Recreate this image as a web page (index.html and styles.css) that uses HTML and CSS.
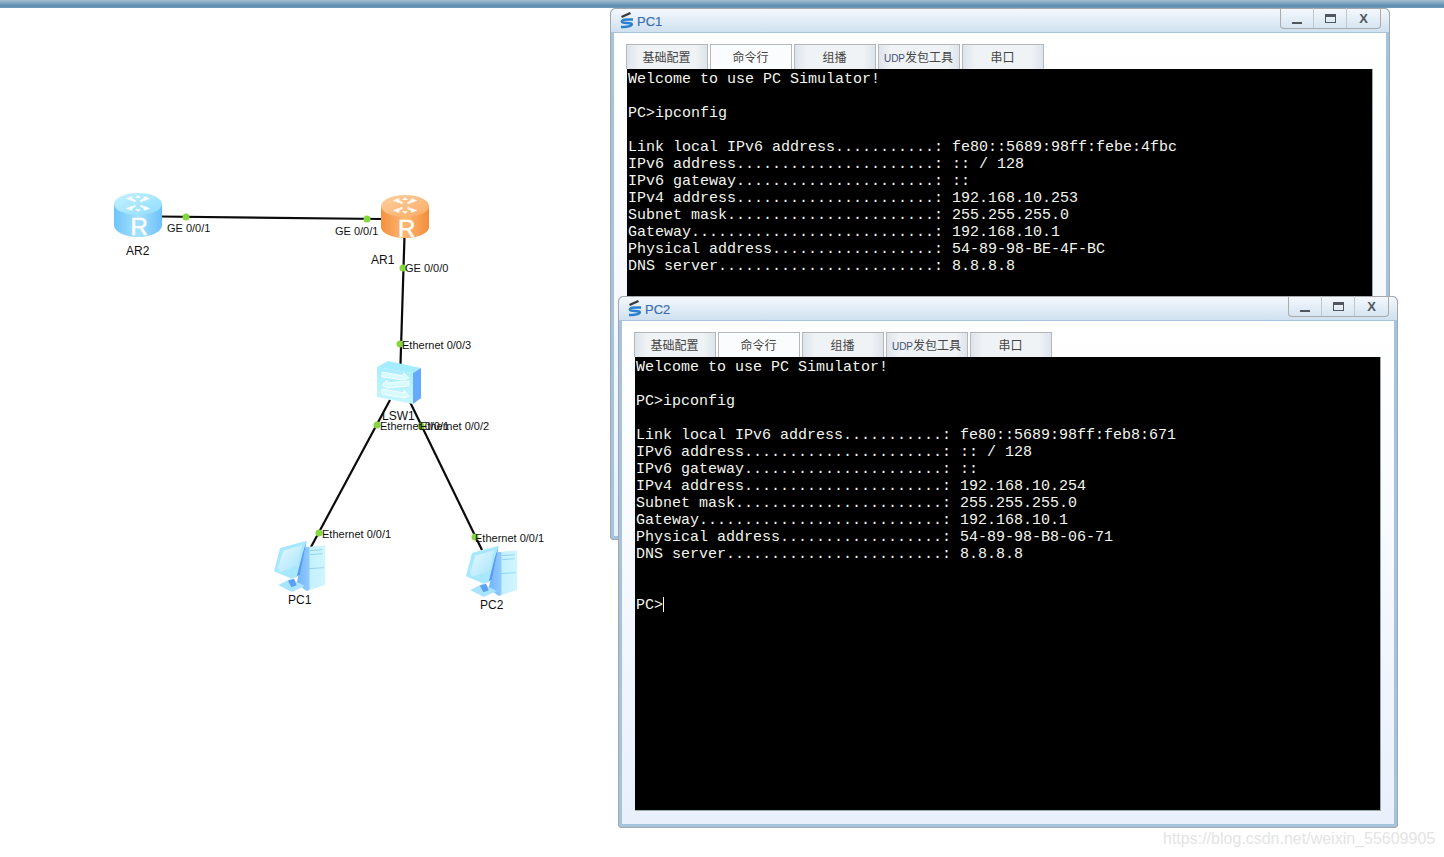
FILE: index.html
```html
<!DOCTYPE html>
<html lang="zh">
<head>
<meta charset="utf-8">
<title>eNSP</title>
<link rel="stylesheet" href="styles.css">
</head>
<body>
<div class="desktop">
  <div class="topbar"></div>

  <svg class="topology" width="610" height="857" viewBox="0 0 610 857">
    <defs>
      <linearGradient id="blueBody" x1="0" x2="1" y1="0" y2="0">
        <stop offset="0" stop-color="#6fc4fb"/><stop offset="0.5" stop-color="#a5e2ff"/><stop offset="1" stop-color="#6cc0fa"/>
      </linearGradient>
      <linearGradient id="blueTop" x1="0" x2="1" y1="0" y2="1">
        <stop offset="0" stop-color="#c4f2ff"/><stop offset="1" stop-color="#8fdcff"/>
      </linearGradient>
      <linearGradient id="orangeBody" x1="0" x2="1" y1="0" y2="0">
        <stop offset="0" stop-color="#f4913f"/><stop offset="0.5" stop-color="#fdb873"/><stop offset="1" stop-color="#f28d3b"/>
      </linearGradient>
      <linearGradient id="orangeTop" x1="0" x2="1" y1="0" y2="1">
        <stop offset="0" stop-color="#fcd0a0"/><stop offset="1" stop-color="#fbab64"/>
      </linearGradient>
      <linearGradient id="swFront" x1="0" x2="0" y1="0" y2="1">
        <stop offset="0" stop-color="#a8edff"/><stop offset="1" stop-color="#c6f6ff"/>
      </linearGradient>
      <linearGradient id="screen" x1="0" x2="1" y1="0" y2="1">
        <stop offset="0" stop-color="#e6faff"/><stop offset="1" stop-color="#a8e2ff"/>
      </linearGradient>
      <linearGradient id="tower" x1="0" x2="1" y1="0" y2="0">
        <stop offset="0" stop-color="#74b2fb"/><stop offset="0.42" stop-color="#8ec8ff"/><stop offset="0.48" stop-color="#c4f0ff"/><stop offset="1" stop-color="#cff6ff"/>
      </linearGradient>
      <g id="arrows" class="router-arrows">
        <path d="M21.500 8.500L15 4.500M26.500 8.500L33 4.500M21.500 12.500L15 16.500M26.500 12.500L33 16.500"/>
        <path class="router-heads" d="M11.500 5.500l7-2.500-1 5zM36.500 5.500l-7-2.500 1 5zM11.500 15.500l7 2.500-1-5zM36.500 15.500l-7 2.500 1-5z"/>
        <path class="router-heads" d="M24 2l3 3h-6zM24 19l3-3h-6z"/>
      </g>
      <g id="pc">
        <path d="M110 190L135 82L195 76V195L140 213Z" fill="url(#tower)"/>
        <path d="M150 92l38-3M150 104l38-3M146 146l46-3" class="pc-vents"/>
        <path d="M55 195L92 176L135 198L95 216Z" fill="#a8e4ff"/>
        <path d="M84 182l18-6 8 20-16 6z" fill="#5c9ff5"/>
        <path d="M42 154L60 84L140 62L120 164L95 176Z" fill="#a8e8ff"/>
        <path d="M140 62L120 164L95 176L110 170L128 100Z" fill="#5a9af0"/>
        <path d="M54 144L70 92L126 76L112 138L60 156Z" fill="url(#screen)"/>
      </g>
    </defs>

    <g class="links">
      <line x1="160" y1="216.500" x2="382" y2="219"/>
      <line x1="404.500" y1="236" x2="400.500" y2="364"/>
      <line x1="390" y1="400" x2="311" y2="547"/>
      <line x1="410" y1="402" x2="482" y2="550"/>
    </g>

    <g class="node">
      <path d="M114 204v21c0 6.500 10.500 12 24 12s24-5.500 24-12v-21z" fill="url(#blueBody)"/>
      <ellipse cx="138" cy="204" rx="24" ry="11" fill="url(#blueTop)"/>
      <use href="#arrows" x="114" y="193"/>
      <text class="badge" x="130.500" y="235">R</text>
    </g>
    <g class="node">
      <path d="M381 206v21c0 6 10.500 11 24 11s24-5 24-11v-21z" fill="url(#orangeBody)"/>
      <ellipse cx="405" cy="206" rx="24" ry="11" fill="url(#orangeTop)"/>
      <use href="#arrows" x="381" y="195"/>
      <text class="badge" x="398" y="237">R</text>
    </g>
    <g class="node">
      <path d="M377 367L388 361L421 368L413 373Z" fill="#a4ecff"/>
      <path d="M413 373L421 368V398L413 404Z" fill="#66a9ff"/>
      <path d="M377 367L413 373V404L377 397Z" fill="url(#swFront)"/>
      <path class="sw-arrows" d="M382 372L404 376V373L409 378L404 380L382 377ZM409 381L387 383V380L382 385L387 388L409 386ZM382 389L404 393V390L409 396L404 398L382 394Z"/>
    </g>

    <use href="#pc" transform="translate(260 520) scale(.3333)"/>
    <use href="#pc" transform="translate(452 525) scale(.3333)"/>

    <g class="dots">
      <circle cx="186" cy="217" r="3.500"/>
      <circle cx="367" cy="219" r="3.500"/>
      <circle cx="403" cy="268" r="3.500"/>
      <circle cx="400" cy="344" r="3.500"/>
      <circle cx="377" cy="425" r="3.500"/>
      <circle cx="421" cy="426" r="3.500"/>
      <circle cx="319" cy="533" r="3.500"/>
      <circle cx="475" cy="537" r="3.500"/>
    </g>

    <g class="port-labels">
      <text x="167" y="232">GE 0/0/1</text>
      <text x="335" y="235">GE 0/0/1</text>
      <text x="405" y="272">GE 0/0/0</text>
      <text x="402" y="349">Ethernet 0/0/3</text>
      <text x="380" y="430">Ethernet 0/0/1</text>
      <text x="420" y="430">Ethernet 0/0/2</text>
      <text x="322" y="538">Ethernet 0/0/1</text>
      <text x="475" y="542">Ethernet 0/0/1</text>
    </g>
    <g class="node-labels">
      <text x="126" y="255">AR2</text>
      <text x="371" y="264">AR1</text>
      <text x="382" y="420">LSW1</text>
      <text x="288" y="604">PC1</text>
      <text x="480" y="609">PC2</text>
    </g>
  </svg>

  <section class="window window-pc1">
    <header class="titlebar">
      <svg class="title-icon" width="16" height="17" viewBox="0 0 16 17"><path d="M2 4L11 0l1 2-9 4z" fill="#3a3a3a"/><path d="M14 7.500C8 7.500 2 7 3 10C4 11.500 10 10.500 12.500 11.500C14 13 11 15 2 15" fill="none" stroke="#2b7fd0" stroke-width="2.400"/></svg>
      <span class="title-text">PC1</span>
      <div class="controls">
        <button class="ctl"><span class="ctl-min"></span></button>
        <button class="ctl"><span class="ctl-max"></span></button>
        <button class="ctl ctl-x">X</button>
      </div>
    </header>
    <div class="content">
      <nav class="tabs">
        <div class="tab">基础配置</div>
        <div class="tab tab-active">命令行</div>
        <div class="tab">组播</div>
        <div class="tab"><span class="tab-small">UDP</span>发包工具</div>
        <div class="tab">串口</div>
      </nav>
<pre class="terminal">Welcome to use PC Simulator!

PC&gt;ipconfig

Link local IPv6 address...........: fe80::5689:98ff:febe:4fbc
IPv6 address......................: :: / 128
IPv6 gateway......................: ::
IPv4 address......................: 192.168.10.253
Subnet mask.......................: 255.255.255.0
Gateway...........................: 192.168.10.1
Physical address..................: 54-89-98-BE-4F-BC
DNS server........................: 8.8.8.8
</pre>
    </div>
  </section>

  <section class="window window-pc2">
    <header class="titlebar">
      <svg class="title-icon" width="16" height="17" viewBox="0 0 16 17"><path d="M2 4L11 0l1 2-9 4z" fill="#3a3a3a"/><path d="M14 7.500C8 7.500 2 7 3 10C4 11.500 10 10.500 12.500 11.500C14 13 11 15 2 15" fill="none" stroke="#2b7fd0" stroke-width="2.400"/></svg>
      <span class="title-text">PC2</span>
      <div class="controls">
        <button class="ctl"><span class="ctl-min"></span></button>
        <button class="ctl"><span class="ctl-max"></span></button>
        <button class="ctl ctl-x">X</button>
      </div>
    </header>
    <div class="content">
      <nav class="tabs">
        <div class="tab">基础配置</div>
        <div class="tab tab-active">命令行</div>
        <div class="tab">组播</div>
        <div class="tab"><span class="tab-small">UDP</span>发包工具</div>
        <div class="tab">串口</div>
      </nav>
<pre class="terminal">Welcome to use PC Simulator!

PC&gt;ipconfig

Link local IPv6 address...........: fe80::5689:98ff:feb8:671
IPv6 address......................: :: / 128
IPv6 gateway......................: ::
IPv4 address......................: 192.168.10.254
Subnet mask.......................: 255.255.255.0
Gateway...........................: 192.168.10.1
Physical address..................: 54-89-98-B8-06-71
DNS server........................: 8.8.8.8


PC&gt;<span class="cursor"></span></pre>
    </div>
  </section>

  <div class="watermark">https://blog.csdn.net/weixin_55609905</div>
</div>
</body>
</html>
```
FILE: styles.css
```css
* { box-sizing: border-box; }
html, body { margin: 0; height: 100%; background: #fff; overflow: hidden; }

.desktop { position: relative; width: 1444px; height: 857px; background: #fff; overflow: hidden; font-family: "Liberation Sans", Arial, sans-serif; }
.topbar { height: 8px; background: linear-gradient(#a5bfd3, #5f8eb0 70%, #6f99b8); }

.topology { position: absolute; left: 0; top: 0; }
.links line { stroke: #0b0b0b; stroke-width: 2.200; }
.dots circle { fill: #86d73f; }
.port-labels text { font: 11px "Liberation Sans", Arial, sans-serif; fill: #111; }
.node-labels text { font: 12px "Liberation Sans", Arial, sans-serif; fill: #111; }
.badge { font: 24px "Liberation Sans", Arial, sans-serif; fill: #fff; stroke: #fff; stroke-width: .5; }
.router-arrows path { fill: none; stroke: #fff; stroke-width: 2.400; stroke-opacity: .8; }
.router-arrows .router-heads { fill: #fff; fill-opacity: .85; stroke: none; }
.sw-arrows { fill: #d8fbff; stroke: #fff; stroke-width: .8; }
.pc-vents { stroke: #7cc2ee; stroke-width: 2; fill: none; }

.window { position: absolute; width: 780px; display: flex; flex-direction: column; border: 1px solid #a2a8ad; border-radius: 5px 5px 3px 3px; background: #a5c3da; padding: 0 3px 3px; }
.window-pc1 { left: 610px; top: 8px; height: 532px; }
.window-pc2 { left: 618px; top: 296px; height: 532px; }

.titlebar { height: 24px; margin: 0 -3px; padding: 0 8px 0 8px; flex: none; display: flex; align-items: flex-start; background: linear-gradient(#f4f8fc, #cfe0f0); border-bottom: 1px solid #a9c5dc; border-radius: 5px 5px 0 0; position: relative; }
.title-icon { margin-top: 3px; flex: none; }
.title-text { margin: 5px 0 0 2px; font-size: 13px; line-height: 15px; color: #3b6eb0; -webkit-text-stroke: .2px #3b6eb0; }
.controls { margin-left: auto; margin-top: -1px; display: flex; height: 21px; border: 1px solid #aaa; border-top: 0; border-radius: 0 0 4px 4px; }
.ctl { width: 33px; padding: 0; border: 0; border-right: 1px solid #c0c8d0; background: transparent; display: flex; align-items: center; justify-content: center; color: #50565c; font: bold 13px "Liberation Sans", Arial, sans-serif; }
.ctl-x { border-right: 0; }
.ctl-min { width: 10px; height: 2px; margin-top: 10px; background: #50565c; }
.ctl-max { width: 11px; height: 9px; border: 1px solid #50565c; border-top-width: 3px; }

.content { flex: 1; min-height: 0; background: linear-gradient(#fff, #fbfcfe 30%, #e9f0fc); padding: 11px 12px 13px 12px; display: flex; flex-direction: column; }
.tabs { display: flex; gap: 2px; height: 25px; flex: none; }
.tab { width: 82px; height: 25px; padding-right: 1px; border: 1px solid #b4b8bc; border-bottom: 0; background: linear-gradient(90deg, #dde4ea, #f0f3f6 15%, #f0f3f6 85%, #dde4ea); color: #444; font: 12px/23px "Noto Sans CJK SC", sans-serif; text-align: center; white-space: nowrap; }
.tab-active { background: #fbfcfd; }
.tab-small { font: 10px "Liberation Sans", Arial, sans-serif; color: #3d4f78; }

.terminal { flex: 1; min-height: 0; margin: 0 0 0 1px; padding: 2px 0 0 1px; width: 746px; background: #000; color: #f2f6ee; border-right: 1px solid #9aa; border-bottom: 1px solid #9aa; font: 15px/17px "Liberation Mono", "Courier New", monospace; overflow: hidden; }
.cursor { display: inline-block; width: 1px; height: 15px; vertical-align: -3px; background: #fff; }

.watermark { position: absolute; left: 1163px; top: 829px; font-size: 16px; line-height: 19px; color: #e4e4e4; white-space: nowrap; }
```
